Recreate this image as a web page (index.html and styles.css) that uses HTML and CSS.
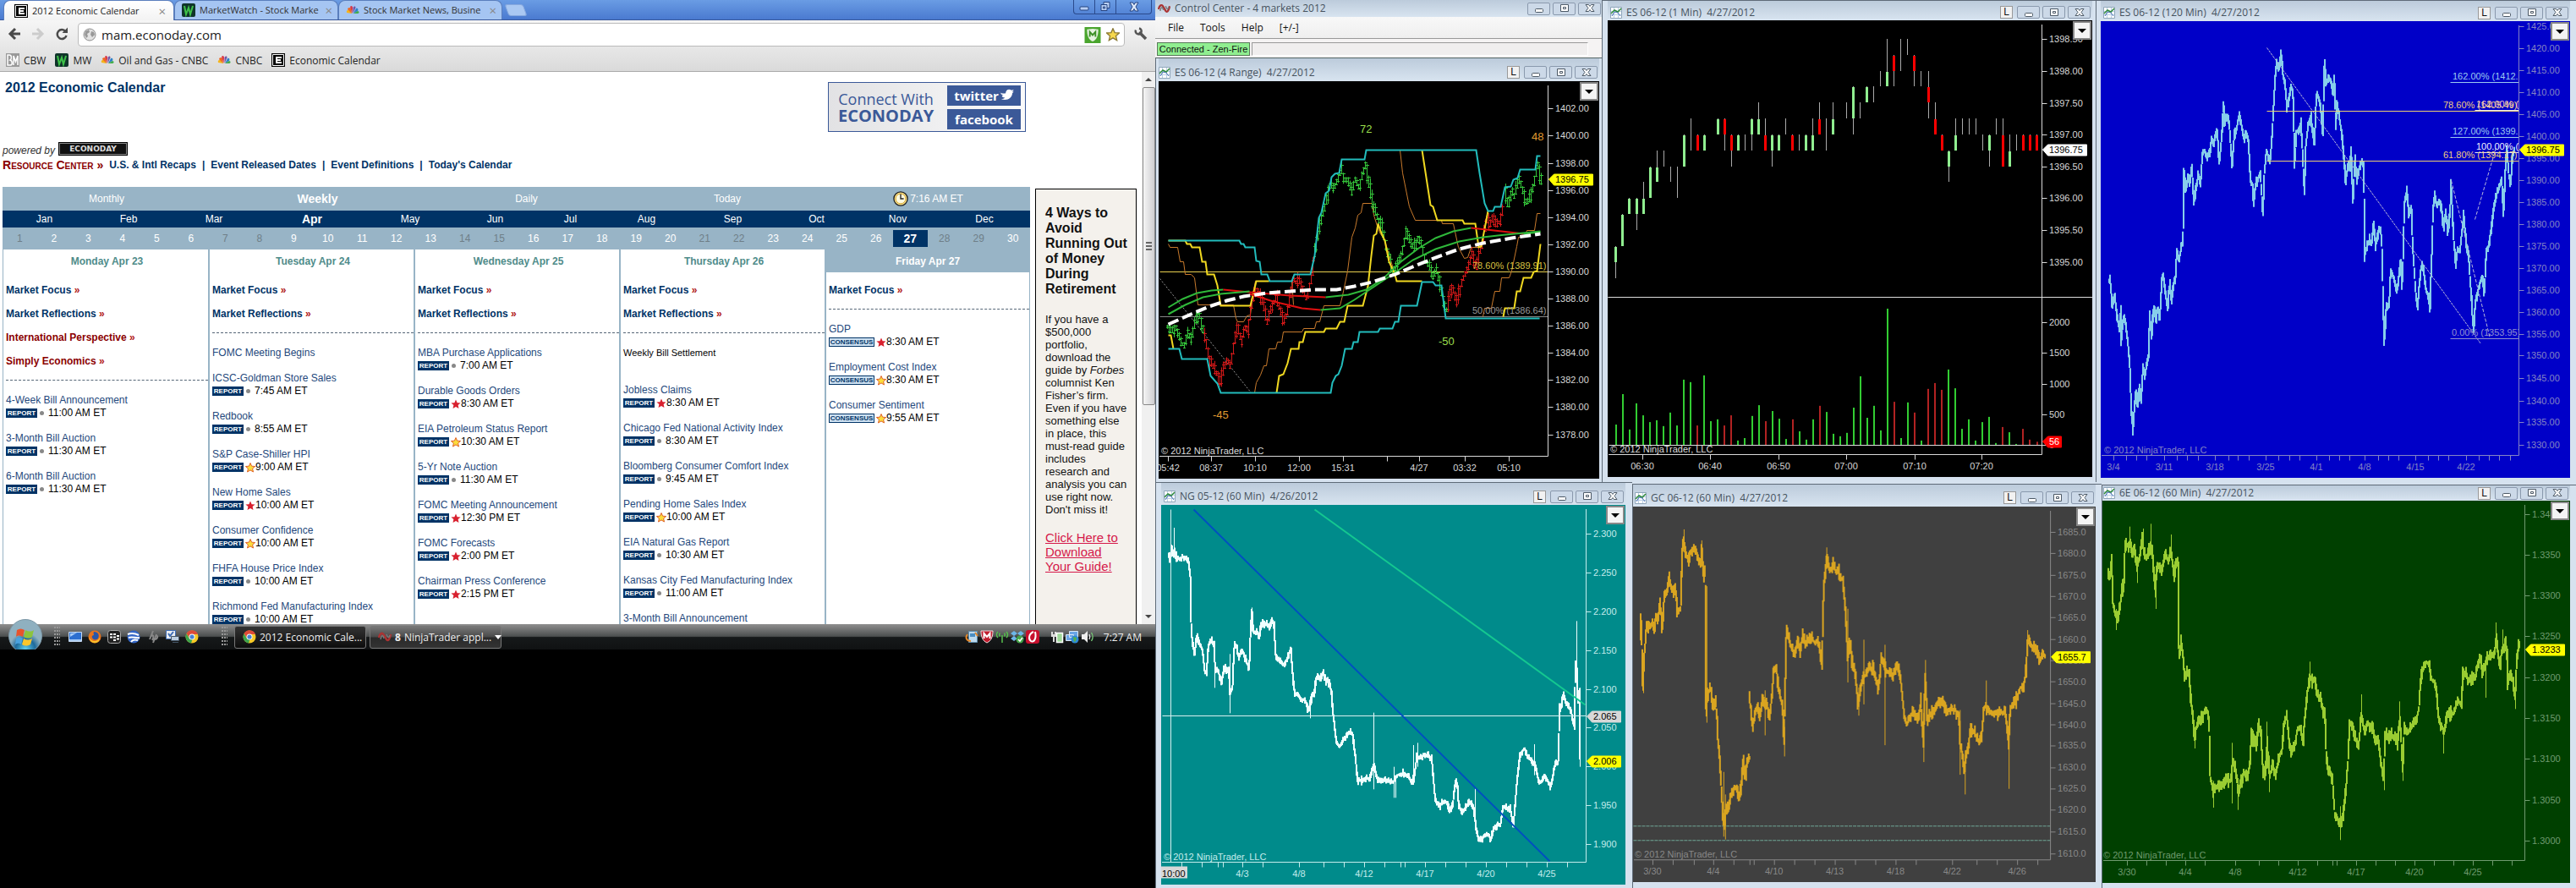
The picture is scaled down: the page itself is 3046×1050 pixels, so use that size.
FILE: index.html
```html
<!DOCTYPE html>
<html lang="en">
<head>
<meta charset="utf-8">
<title>2012 Economic Calendar</title>
<link rel="stylesheet" href="styles.css">
</head>
<body>
<svg class="defs" width="0" height="0" aria-hidden="true">
  <symbol id="i-econ" viewBox="0 0 16 16"><path fill="#000" d="M0 0h16v16H0z"/><path fill="none" stroke="#fff" d="M1.5 1.5h13v13h-13z"/><path fill="#fff" d="M5 4h7v2H7v1h4v2H7v1h5v2H5z"/></symbol>
  <symbol id="i-mw" viewBox="0 0 16 16"><rect width="16" height="16" rx="2" fill="#10352a"/><path d="M3 3l2 10 3-8 2 8 3-10" fill="none" stroke="#3fc24a" stroke-width="2"/></symbol>
  <symbol id="i-nbc" viewBox="0 0 16 16"><path fill="#f4b51c" d="M7 12L1 11c-1-2 1-4 3-3z"/><path fill="#ee6a26" d="M7 12L2 7c0-2 3-3 4-1z"/><path fill="#d93848" d="M7.500 12L5 4c1-2 3-1 3 1z"/><path fill="#7455a5" d="M8.500 12V5c1-2 3-2 3 0z"/><path fill="#2f82c8" d="M9 12l3-6c2-1 3 1 2 3z"/><path fill="#43ad4c" d="M9 12l5-3c2 0 2 3 0 3z"/></symbol>
  <symbol id="i-bm" viewBox="0 0 16 16"><path fill="#999" d="M0 0h16v16H0z"/><path fill="none" stroke="#fff" stroke-width="1.500" d="M2 2v12h3c3 0 3-5 0-6 2-1 2-6-1-6zM9 14V3l2.500 7L14 3v11"/></symbol>
  <symbol id="i-chart" viewBox="0 0 14 14"><path fill="#fff" stroke="#8fa6ba" d="M.5.5h13v13H.5z"/><path stroke="#b9cfe4" d="M4.500 1v12M9.500 1v12M1 5.500h12M1 9.500h12"/><path fill="none" stroke="#2f8a3c" stroke-width="1.500" d="M1 8l4-4 4 2 4-4"/><path fill="none" stroke="#4a6fb5" d="M2 11l3-5 4 1 3 4"/></symbol>
  <symbol id="i-nt" viewBox="0 0 16 12"><path fill="none" stroke="#a33" stroke-width="2.500" d="M1 7c1-5 4-7 6-3l3 5c2 3 4-1 5-6"/><path fill="none" stroke="#777" stroke-width="1.500" d="M3 9c1-5 3-6 4-1M10 3c1 4 3 5 4 1"/></symbol>
  <symbol id="i-min" viewBox="0 0 14 12"><rect x="2.500" y="6.500" width="9" height="4" rx="1" fill="#fff" stroke="#4c5966"/></symbol>
  <symbol id="i-max" viewBox="0 0 14 12"><path fill="#fff" stroke="#4c5966" d="M2.500 1.500h9v8h-9z"/><path fill="none" stroke="#4c5966" d="M5.500 4.500h3v2h-3z"/></symbol>
  <symbol id="i-close" viewBox="0 0 14 12"><path fill="#fff" stroke="#4c5966" d="M2 1.500h3.500L7 3.500l1.500-2H12L9 5.500l3 4H8.500L7 7.500l-1.500 2H2l3-4z"/></symbol>
  <symbol id="i-star" viewBox="0 0 12 12"><path d="M6 .5l1.600 3.700 4 .3-3 2.600.9 3.900L6 8.900 2.500 11l.9-3.900-3-2.600 4-.3z"/></symbol>
  <symbol id="i-chrome" viewBox="0 0 16 16"><circle cx="8" cy="8" r="7.500" fill="#f6c926"/><path fill="#dd4b39" d="M1.500 4.200A7.500 7.500 0 0 1 15 5H8L5 9z"/><path fill="#3da44d" d="M1.500 4.200L5 10l3.500 1L7 15.400A7.500 7.500 0 0 1 1.500 4.200z"/><circle cx="8" cy="8" r="3.500" fill="#fff"/><circle cx="8" cy="8" r="2.600" fill="#4a83d4"/></symbol>
</svg>
<div class="desktop">
  <div class="screen">
    <main class="browser">
      <header class="tabstrip">
        <div class="tab active"><svg class="i16"><use href="#i-econ"/></svg><span class="tab-name">2012 Economic Calendar</span><button class="tab-x" aria-label="Close tab">×</button></div>
        <div class="tab"><svg class="i16"><use href="#i-mw"/></svg><span class="tab-name">MarketWatch - Stock Marke</span><button class="tab-x" aria-label="Close tab">×</button></div>
        <div class="tab"><svg class="i16"><use href="#i-nbc"/></svg><span class="tab-name">Stock Market News, Busine</span><button class="tab-x" aria-label="Close tab">×</button></div>
        <button class="newtab" aria-label="New tab"></button>
        <div class="winctl"><button aria-label="Minimize"><svg viewBox="0 0 14 12"><rect x="2" y="6" width="10" height="4" rx="1" fill="#b9d0f5" stroke="#25427f"/></svg></button><button aria-label="Restore"><svg viewBox="0 0 14 12"><path fill="#b9d0f5" stroke="#25427f" d="M5 .5h7v7H5z"/><path fill="#b9d0f5" stroke="#25427f" d="M2 3.500h7v7H2zM4.500 6h2v2h-2z"/></svg></button><button class="wide" aria-label="Close"><svg viewBox="0 0 14 12"><path fill="#dbe7fa" stroke="#25427f" d="M2 1h3.500L7 3.500 8.500 1H12L9 6l3 5H8.500L7 8.500 5.500 11H2l3-5z"/></svg></button></div>
      </header>
      <div class="toolbar">
        <button class="nav" aria-label="Back"><svg viewBox="0 0 16 16"><path fill="none" stroke="#4a4a4a" stroke-width="3" d="M9 2L3 8l6 6M3 8h12"/></svg></button>
        <button class="nav" aria-label="Forward"><svg viewBox="0 0 16 16"><path fill="none" stroke="#ccc" stroke-width="3" d="M7 2l6 6-6 6M13 8H1"/></svg></button>
        <button class="nav" aria-label="Reload"><svg viewBox="0 0 16 16"><path fill="none" stroke="#4a4a4a" stroke-width="2.500" d="M12.500 5A5.500 5.500 0 1 0 13.500 10"/><path fill="#4a4a4a" d="M8.500 7H15V.5z"/></svg></button>
        <div class="omnibox">
          <svg class="i16" viewBox="0 0 16 16"><circle cx="8" cy="8" r="7" fill="#e3e3e3" stroke="#8d8d8d"/><path fill="#999" d="M3 4l4-2 1 3-3 2 1 3-2 2-2-4zM10 4l3 1 1 3-3 3-2-3z"/></svg>
          <input class="url" type="text" value="mam.econoday.com" aria-label="Address">
          <svg class="badge-m" viewBox="0 0 20 20"><path fill="#4aa52e" d="M0 0h20v20H0z"/><path fill="#e4f2df" d="M3 3l7-1 7 1c0 8-2 13-7 15C5 16 3 11 3 3z"/><path fill="none" stroke="#3b8f25" stroke-width="2" d="M6.500 12V6l3.500 4 3.500-4v6"/></svg>
          <svg class="i16 fav"><use href="#i-star"/></svg>
        </div>
        <button class="nav" aria-label="Settings"><svg viewBox="0 0 16 16"><path fill="none" stroke="#555" stroke-width="3.500" d="M6 6l8 8"/><path fill="none" stroke="#555" stroke-width="2.500" d="M2 3.500A3.500 3.500 0 1 0 6 1.500"/></svg></button>
      </div>
      <nav class="bookmarks">
        <a href="#"><svg class="i16"><use href="#i-bm"/></svg>CBW</a>
        <a href="#"><svg class="i16"><use href="#i-mw"/></svg>MW</a>
        <a href="#"><svg class="i16"><use href="#i-nbc"/></svg>Oil and Gas - CNBC</a>
        <a href="#"><svg class="i16"><use href="#i-nbc"/></svg>CNBC</a>
        <a href="#"><svg class="i16"><use href="#i-econ"/></svg>Economic Calendar</a>
      </nav>
      <div class="viewport">
        <div class="page">
          <div class="masthead">
            <h1>2012 Economic Calendar</h1>
            <div class="connect">
              <div class="connect-text"><span>Connect With</span><b>ECONODAY</b></div>
              <div class="social"><a class="tw" href="#">twitter<svg viewBox="0 0 20 16"><path fill="#fff" d="M0 3c3 3 6 4 9 3 0-4 4-7 8-4l3-1-2 3 2 0-2 2c0 6-7 11-15 8 2 0 4-1 5-2-3 0-4-2-4-3h2C3 8 2 6 2 6l2 0C2 5 1 4 0 3z"/></svg></a><a href="#">facebook</a></div>
            </div>
          </div>
          <p class="powered"><i>powered by</i><span class="econo-logo">ECONODAY</span></p>
          <nav class="resource"><span class="rc"><b>R</b>esource <b>C</b>enter »</span><a href="#">U.S. &amp; Intl Recaps</a><span>|</span><a href="#">Event Released Dates</a><span>|</span><a href="#">Event Definitions</a><span>|</span><a href="#">Today's Calendar</a></nav>
          <div class="content">
            <section class="calendar">
              <div class="views"><a href="#">Monthly</a><a href="#" class="on">Weekly</a><a href="#">Daily</a><a href="#">Today</a><span class="clock"><svg viewBox="0 0 20 24"><circle cx="10" cy="12" r="9" fill="#f7e08a" stroke="#222" stroke-width="1.500"/><circle cx="10" cy="12" r="6.500" fill="#fffbe0" stroke="#d1a02a"/><path d="M10 6v6h4" fill="none" stroke="#222" stroke-width="1.500"/></svg>7:16 AM ET</span></div>
              <div class="months"><a href="#">Jan</a><a href="#">Feb</a><a href="#">Mar</a><a href="#" class="on">Apr</a><a href="#">May</a><a href="#">Jun</a><a href="#">Jul</a><a href="#">Aug</a><a href="#">Sep</a><a href="#">Oct</a><a href="#">Nov</a><a href="#">Dec</a></div>
              <div class="days"><a href="#" class="off">1</a><a href="#">2</a><a href="#">3</a><a href="#">4</a><a href="#">5</a><a href="#">6</a><a href="#" class="off">7</a><a href="#" class="off">8</a><a href="#">9</a><a href="#">10</a><a href="#">11</a><a href="#">12</a><a href="#">13</a><a href="#" class="off">14</a><a href="#" class="off">15</a><a href="#">16</a><a href="#">17</a><a href="#">18</a><a href="#">19</a><a href="#">20</a><a href="#" class="off">21</a><a href="#" class="off">22</a><a href="#">23</a><a href="#">24</a><a href="#">25</a><a href="#">26</a><a href="#" class="on">27</a><a href="#" class="off">28</a><a href="#" class="off">29</a><a href="#">30</a></div>
              <div class="week">
                <div class="day"><h2>Monday Apr 23</h2>
                  <div class="links"><a href="#">Market Focus <i>»</i></a><a href="#">Market Reflections <i>»</i></a><a href="#" class="red">International Perspective <i>»</i></a><a href="#" class="red">Simply Economics <i>»</i></a></div>
                  <div class="ev"><a href="#">4-Week Bill Announcement</a><p><b class="rep">REPORT</b><i class="dot"></i>11:00 AM ET</p></div>
                  <div class="ev"><a href="#">3-Month Bill Auction</a><p><b class="rep">REPORT</b><i class="dot"></i>11:30 AM ET</p></div>
                  <div class="ev"><a href="#">6-Month Bill Auction</a><p><b class="rep">REPORT</b><i class="dot"></i>11:30 AM ET</p></div>
                </div>
                <div class="day"><h2>Tuesday Apr 24</h2>
                  <div class="links"><a href="#">Market Focus <i>»</i></a><a href="#">Market Reflections <i>»</i></a></div>
                  <div class="ev"><a href="#">FOMC Meeting Begins</a></div>
                  <div class="ev"><a href="#">ICSC-Goldman Store Sales</a><p><b class="rep">REPORT</b><i class="dot"></i>7:45 AM ET</p></div>
                  <div class="ev"><a href="#">Redbook</a><p><b class="rep">REPORT</b><i class="dot"></i>8:55 AM ET</p></div>
                  <div class="ev"><a href="#">S&amp;P Case-Shiller HPI</a><p><b class="rep">REPORT</b><svg class="st gold"><use href="#i-star"/></svg>9:00 AM ET</p></div>
                  <div class="ev"><a href="#">New Home Sales</a><p><b class="rep">REPORT</b><svg class="st"><use href="#i-star"/></svg>10:00 AM ET</p></div>
                  <div class="ev"><a href="#">Consumer Confidence</a><p><b class="rep">REPORT</b><svg class="st gold"><use href="#i-star"/></svg>10:00 AM ET</p></div>
                  <div class="ev"><a href="#">FHFA House Price Index</a><p><b class="rep">REPORT</b><i class="dot"></i>10:00 AM ET</p></div>
                  <div class="ev"><a href="#">Richmond Fed Manufacturing Index</a><p><b class="rep">REPORT</b><i class="dot"></i>10:00 AM ET</p></div>
                </div>
                <div class="day"><h2>Wednesday Apr 25</h2>
                  <div class="links"><a href="#">Market Focus <i>»</i></a><a href="#">Market Reflections <i>»</i></a></div>
                  <div class="ev"><a href="#">MBA Purchase Applications</a><p><b class="rep">REPORT</b><i class="dot"></i>7:00 AM ET</p></div>
                  <div class="ev"><a href="#">Durable Goods Orders</a><p><b class="rep">REPORT</b><svg class="st"><use href="#i-star"/></svg>8:30 AM ET</p></div>
                  <div class="ev"><a href="#">EIA Petroleum Status Report</a><p><b class="rep">REPORT</b><svg class="st gold"><use href="#i-star"/></svg>10:30 AM ET</p></div>
                  <div class="ev"><a href="#">5-Yr Note Auction</a><p><b class="rep">REPORT</b><i class="dot"></i>11:30 AM ET</p></div>
                  <div class="ev"><a href="#">FOMC Meeting Announcement</a><p><b class="rep">REPORT</b><svg class="st"><use href="#i-star"/></svg>12:30 PM ET</p></div>
                  <div class="ev"><a href="#">FOMC Forecasts</a><p><b class="rep">REPORT</b><svg class="st"><use href="#i-star"/></svg>2:00 PM ET</p></div>
                  <div class="ev"><a href="#">Chairman Press Conference</a><p><b class="rep">REPORT</b><svg class="st"><use href="#i-star"/></svg>2:15 PM ET</p></div>
                </div>
                <div class="day"><h2>Thursday Apr 26</h2>
                  <div class="links"><a href="#">Market Focus <i>»</i></a><a href="#">Market Reflections <i>»</i></a></div>
                  <div class="ev note"><span>Weekly Bill Settlement</span></div>
                  <div class="ev"><a href="#">Jobless Claims</a><p><b class="rep">REPORT</b><svg class="st"><use href="#i-star"/></svg>8:30 AM ET</p></div>
                  <div class="ev"><a href="#">Chicago Fed National Activity Index</a><p><b class="rep">REPORT</b><i class="dot"></i>8:30 AM ET</p></div>
                  <div class="ev"><a href="#">Bloomberg Consumer Comfort Index</a><p><b class="rep">REPORT</b><i class="dot"></i>9:45 AM ET</p></div>
                  <div class="ev"><a href="#">Pending Home Sales Index</a><p><b class="rep">REPORT</b><svg class="st gold"><use href="#i-star"/></svg>10:00 AM ET</p></div>
                  <div class="ev"><a href="#">EIA Natural Gas Report</a><p><b class="rep">REPORT</b><i class="dot"></i>10:30 AM ET</p></div>
                  <div class="ev"><a href="#">Kansas City Fed Manufacturing Index</a><p><b class="rep">REPORT</b><i class="dot"></i>11:00 AM ET</p></div>
                  <div class="ev"><a href="#">3-Month Bill Announcement</a></div>
                </div>
                <div class="day today"><h2>Friday Apr 27</h2>
                  <div class="links"><a href="#">Market Focus <i>»</i></a></div>
                  <div class="ev"><a href="#">GDP</a><p><b class="con">CONSENSUS</b><svg class="st"><use href="#i-star"/></svg>8:30 AM ET</p></div>
                  <div class="ev"><a href="#">Employment Cost Index</a><p><b class="con">CONSENSUS</b><svg class="st gold"><use href="#i-star"/></svg>8:30 AM ET</p></div>
                  <div class="ev"><a href="#">Consumer Sentiment</a><p><b class="con">CONSENSUS</b><svg class="st gold"><use href="#i-star"/></svg>9:55 AM ET</p></div>
                </div>
              </div>
            </section>
            <aside class="ad">
              <h3>4 Ways to<br>Avoid<br>Running Out<br>of Money<br>During<br>Retirement</h3>
              <p>If you have a<br>$500,000<br>portfolio,<br>download the<br>guide by <em>Forbes</em><br>columnist Ken<br>Fisher’s firm.<br>Even if you have<br>something else<br>in place, this<br>must-read guide<br>includes<br>research and<br>analysis you can<br>use right now.<br>Don't miss it!</p>
              <a href="#">Click Here to<br>Download<br>Your Guide!</a>
            </aside>
          </div>
        </div>
        <div class="scrollbar"><svg viewBox="0 0 8 8"><path fill="#444" d="M0 6l4-4 4 4z"/></svg><div class="thumb"><i></i><i></i><i></i></div><svg viewBox="0 0 8 8"><path fill="#444" d="M0 2l4 4 4-4z"/></svg></div>
      </div>
    </main>
    <footer class="taskbar">
      <button class="orb" aria-label="Start"><svg viewBox="0 0 42 36"><defs><radialGradient id="og" cx=".5" cy=".9"><stop offset="0" stop-color="#5fd0f0"/><stop offset=".6" stop-color="#1d6a9c"/><stop offset="1" stop-color="#8fb0c0"/></radialGradient></defs><circle cx="21" cy="20" r="19.500" fill="url(#og)" stroke="#7c97a6"/><path fill="#e8542c" d="M11 13c3-2 6-2 9 0l-2 8c-3-2-6-2-8 0z"/><path fill="#8cc43c" d="M21 13c4 2 7 2 10 0l-2 8c-3 2-6 2-10 0z"/><path fill="#4aa3e0" d="M10 23c3-2 5-2 8 0l-2 7c-3-2-5-1-7 0z"/><path fill="#fbc62c" d="M19 23c3 2 6 2 10 0l-2 7c-4 2-7 2-10 0z"/></svg></button>
      <span class="grip"></span>
      <div class="quick">
        <svg viewBox="0 0 16 16"><path fill="#2c6fd0" stroke="#c6daf2" d="M.5 2.500h15v11H.5z"/><path fill="#a8ccf5" d="M1 11h14v2H1zM2 4l8-1-8 5z"/></svg>
        <svg viewBox="0 0 16 16"><circle cx="8" cy="8" r="7.500" fill="#e8731c"/><path fill="#2a56a8" d="M7 2c5 0 7 4 5 8-2 2-6 2-7-1-1-2 1-3 2-3 0-1-1-2 0-4z"/><path fill="#f9c22b" d="M1 7c1 6 9 9 13 2 0 8-12 9-13-2z"/></svg>
        <svg viewBox="0 0 16 16"><rect x=".5" y=".5" width="15" height="15" rx="3" fill="#222" stroke="#aaa"/><path fill="#fff" d="M3 4h3v2H3zM7 4h3v2H7zM3 7.500h3v2H3zM7 7.500h3v2H7zM11 6h3v2h-3zM7 11h3v2H7zM11 9.500h3v2h-3z"/></svg>
        <svg viewBox="0 0 16 16"><circle cx="8" cy="8" r="7.500" fill="#3467c8"/><path fill="none" stroke="#fff" stroke-width="2" d="M1 5c5-2 9-1 13 1M2 9c5-2 8 1 13 0M5 14c2-3 5-3 8-2"/></svg>
        <svg viewBox="0 0 16 16"><path fill="none" stroke="#888" stroke-width="2" d="M8 1L4 11M6 7c3-2 3 1 1 5M12 5L8 15M11 7c4-1 2 4-1 4"/></svg>
        <svg viewBox="0 0 16 16"><path fill="#e9edf2" stroke="#3e6db5" d="M.5.5h11v10H.5z"/><path stroke="#3e6db5" stroke-width="2" fill="none" d="M3 4l2 3 4-5"/><path fill="#bcd" stroke="#456" d="M6.500 7.500h9v5h-9zM8 14.500h7"/></svg>
        <svg viewBox="0 0 16 16"><use href="#i-chrome"/></svg>
      </div>
      <span class="grip"></span>
      <button class="task on"><svg><use href="#i-chrome"/></svg>2012 Economic Cale...</button>
      <button class="task"><svg viewBox="0 0 16 12"><use href="#i-nt"/></svg><b>8</b> NinjaTrader appl...<span class="caret"></span></button>
      <div class="tray">
        <svg viewBox="0 0 16 16"><path fill="#bcd9ee" stroke="#5f8fb0" d="M4.500 1.500h10v13h-10z"/><path fill="none" stroke="#e6892a" stroke-width="2" d="M3 5c-3 4-1 8 4 8M12 3l3 4"/><path fill="#4b8ec2" d="M6 4h6v4H6z"/></svg>
        <svg viewBox="0 0 16 16"><path fill="#c01d2e" stroke="#f2d9dc" d="M1 1h14c0 7-2 12-7 14C3 13 1 8 1 1z"/><path fill="none" stroke="#fff" stroke-width="2" d="M4.500 10V4L8 8l3.500-4v6"/></svg>
        <svg viewBox="0 0 16 16"><path fill="none" stroke="#55c04c" stroke-width="1.500" d="M3 2c-2 2-2 5 0 7M13 2c2 2 2 5 0 7M5.500 3.500c-1 1-1 3 0 4M10.500 3.500c1 1 1 3 0 4M8 6v9"/></svg>
        <svg viewBox="0 0 16 16"><path fill="#6db6e8" d="M4 1l4 3-4 3-4-3zM12 1l4 3-4 3-4-3zM4 7l4 3-4 3-4-3zM12 7l4 3-4 3-4-3z"/><circle cx="11" cy="11" r="4.500" fill="#43a447"/><path fill="none" stroke="#fff" stroke-width="1.500" d="M9 11l2 2 3-4"/></svg>
        <svg viewBox="0 0 16 16"><rect width="16" height="16" rx="3" fill="#c8102e"/><path fill="none" stroke="#fff" stroke-width="2" d="M9 2C3 5 3 11 6 13s7-2 5-11"/></svg>
        <svg class="apart" viewBox="0 0 16 16"><path fill="#ddd" d="M1 2h2v3h2V2h2v6H5v6H3V8H1z"/><path fill="#9fd89a" stroke="#fff" stroke-width="1.500" d="M7.500 3.500h7v11h-7z"/></svg>
        <svg viewBox="0 0 16 16"><path fill="#6aa5e6" stroke="#dbe8f5" d="M4.500 1.500h10v7h-10zM.5 5.500h9v7h-9z"/><circle cx="11" cy="11" r="4.500" fill="#2f8bd6"/><path fill="#58b247" d="M9 8l4 1-1 4-2 1z"/></svg>
        <svg viewBox="0 0 16 16"><path fill="#eee" d="M1 5h3l4-4v14l-4-4H1z"/><path fill="none" stroke="#eee" stroke-width="1.300" d="M10 5c1 2 1 4 0 6"/><path fill="none" stroke="#7c7" stroke-width="1.300" d="M12.500 3c2 3 2 7 0 10"/></svg>
        <time>7:27 AM</time>
      </div>
    </footer>
  </div>

  <div class="screen2">
    <div class="row top">
      <div class="stack">
        <section class="control">
          <header class="cbar"><svg class="nt" viewBox="0 0 16 12"><use href="#i-nt"/></svg><h2>Control Center - 4 markets 2012</h2><span class="ctl"><button aria-label="Minimize"><svg><use href="#i-min"/></svg></button><button aria-label="Maximize"><svg><use href="#i-max"/></svg></button><button aria-label="Close"><svg><use href="#i-close"/></svg></button></span></header>
          <nav class="menu"><button>File</button><button>Tools</button><button>Help</button><button>[+/-]</button></nav>
          <div class="status"><span class="ok">Connected - Zen-Fire</span><span class="well"></span></div>
        </section>
        <section class="win w1" data-chart="range4" data-title="ES 06-12 (4 Range)  4/27/2012"></section>
      </div>
      <section class="win w2" data-chart="min1" data-title="ES 06-12 (1 Min)  4/27/2012"></section>
      <section class="win w3" data-chart="min120" data-title="ES 06-12 (120 Min)  4/27/2012"></section>
    </div>
    <div class="row bottom">
      <section class="win w4" data-chart="gas" data-title="NG 05-12 (60 Min)  4/26/2012"></section>
      <section class="win w5" data-chart="gold" data-title="GC 06-12 (60 Min)  4/27/2012"></section>
      <section class="win w6" data-chart="euro" data-title="6E 06-12 (60 Min)  4/27/2012"></section>
    </div>
  </div>
</div>
<script src="charts.js"></script>
</body>
</html>
```
FILE: styles.css
```css
* { box-sizing: border-box; }
body { margin: 0; background: #000; font-family: "Liberation Sans", Arial, sans-serif; font-size: 12px; }
h1, h2, h3, p { margin: 0; font-weight: normal; }
a { text-decoration: none; color: inherit; }
button { font: inherit; padding: 0; border: 0; background: none; color: inherit; }
.defs { position: absolute; }
.desktop { display: grid; grid-template-columns: 1366fr 1680fr; align-items: start; }
.screen { min-width: 0; background: #000; }
.i16 { width: 16px; height: 16px; flex: none; }

/* browser chrome */
.browser { font-family: "Open Sans", "Noto Sans", sans-serif; }
.tabstrip { display: flex; height: 24px; background: linear-gradient(#6a9ce4, #4a7ad0); border-bottom: 1px solid #39589a; padding-left: 4px; align-items: flex-end; }
.tab { display: flex; align-items: center; gap: 5px; width: 194px; height: 23px; padding: 0 6px 0 8px; background: #a5c5f2; border: 1px solid #5a7ebd; border-bottom: 0; border-radius: 8px 8px 0 0; color: #333; font-size: 11px; }
.tab.active { width: 202px; height: 24px; margin-bottom: -1px; background: linear-gradient(#fff, #f3f3f3); padding: 0 9px 0 12px; color: #222; }
.tab-name { flex: 1; white-space: nowrap; line-height: 20px; }
.tab-x { color: #888; font-size: 15px; line-height: 18px; }
.newtab { width: 22px; height: 14px; background: #aac8f2; border: 1px solid #86a8de; border-radius: 3px; transform: skewX(20deg); margin: 0 0 4px 5px; }
.winctl { margin-left: auto; margin-right: 4px; align-self: flex-start; display: flex; height: 17px; border: 1px solid #2a4a8c; border-top: 0; border-radius: 0 0 4px 4px; }
.winctl button { width: 25px; display: grid; place-items: center; border-right: 1px solid #2a4a8c; }
.winctl button.wide { width: 41px; border: 0; }
.winctl svg { width: 14px; height: 12px; }
.toolbar { display: flex; align-items: center; gap: 10px; height: 34px; padding: 2px 8px; background: linear-gradient(#f6f6f6, #e6e6e6); }
.nav { width: 18px; height: 18px; }
.nav svg { width: 16px; height: 16px; }
.omnibox { flex: 1; height: 28px; display: flex; align-items: center; gap: 6px; background: #fff; border: 1px solid #bbb; border-radius: 4px; padding: 0 5px; }
.url { flex: 1; min-width: 0; border: 0; outline: 0; font: 15px "Open Sans", "Noto Sans", sans-serif; color: #222; padding: 0; height: 24px; background: none; }
.badge-m { width: 20px; height: 19px; }
.fav { fill: #f7d84c; stroke: #8c7a35; stroke-width: 1; }
.bookmarks { display: flex; align-items: center; gap: 11px; height: 27px; padding: 0 7px; background: linear-gradient(#e6e6e6, #dadada); border-bottom: 1px solid #aaa; color: #222; }
.bookmarks a { display: flex; align-items: center; gap: 5px; }

/* page */
.viewport { display: flex; height: 653px; overflow: hidden; background: #fff; font-family: "Liberation Sans", Arial, sans-serif; }
.page { flex: 1; min-width: 0; padding: 12px 6px 0 3px; }
.masthead { display: flex; justify-content: space-between; align-items: flex-start; padding: 0 131px 0 3px; height: 69px; }
h1 { font-size: 16px; line-height: 14px; font-weight: bold; color: #036; }
.connect { display: flex; width: 234px; height: 59px; border: 1px solid #3b5998; padding: 3px 5px 3px 11px; background: linear-gradient(90deg, #e2e2e4, #fafafa); justify-content: space-between; }
.connect-text { display: flex; flex-direction: column; align-items: center; justify-content: center; color: #3b5998; font-family: "Open Sans", sans-serif; font-size: 18px; line-height: 20px; }
.connect-text b { font-size: 20px; }
.social { display: flex; flex-direction: column; gap: 4px; width: 87px; }
.social a { flex: 1; background: #3b5998; color: #fff; font: bold 15px/24px "Open Sans", sans-serif; text-align: center; }
.social svg { width: 18px; height: 14px; }
.powered { display: flex; align-items: center; gap: 5px; height: 20px; color: #333; }
.powered i { padding-top: 4px; }
.econo-logo { width: 80px; height: 14px; background: #111; border: 1px solid #888; outline: 1px solid #000; color: #ddd; font: bold 9px/12px "DejaVu Sans", sans-serif; text-align: center; }
.resource { display: flex; height: 35px; align-items: flex-start; font-weight: bold; color: #036; line-height: 18px; gap: 7px; }
.rc { font-variant: small-caps; color: #8b0000; font-size: 14px; }
.content { display: flex; gap: 6px; align-items: flex-start; }
.calendar { flex: 1; min-width: 0; }
.views, .months, .days { display: grid; text-align: center; color: #fff; background: #98b4c6; }
.views { grid-template-columns: 246fr 253fr 241fr 234fr 241fr; height: 28px; line-height: 28px; }
.views .on, .months .on { font-weight: bold; font-size: 14px; }
.clock { display: flex; justify-content: center; align-items: center; gap: 2px; }
.clock svg { width: 18px; height: 24px; }
.months { grid-template-columns: 99fr 100fr 102fr 130fr 102fr 99fr 79fr 101fr 103fr 95fr 97fr 108fr; height: 20px; line-height: 20px; background: #036; }
.days { grid-template-columns: repeat(30, 1fr); height: 26px; padding: 3px 0; line-height: 20px; }
.days .off { color: #6f7f88; }
.days .on { background: #036; font-weight: bold; font-size: 14px; }
.week { display: grid; grid-template-columns: repeat(5, 1fr); height: 470px; }
.day { border-left: 1px solid #98b4c6; padding-left: 3px; min-width: 0; }
.day + .day { border-left-width: 2px; }
.day:last-child { border-right: 1px solid #98b4c6; }
h2 { font-size: 12px; }
.day h2 { height: 27px; line-height: 28px; text-align: center; font-weight: bold; color: #4f8c8a; }
.today h2 { background: #98b4c6; color: #fff; margin-left: -3px; }
.links { display: flex; flex-direction: column; padding: 14px 0 15px; gap: 14px; border-bottom: 1px dashed #567; margin-bottom: 16px; font-weight: bold; color: #036; line-height: 14px; }
.links i { font-style: normal; color: #b01818; }
.links .red { color: #8b0000; }
.ev { line-height: 15px; margin-bottom: 15px; color: #24487c; white-space: nowrap; }
.ev.note { font-size: 11px; color: #000; margin-bottom: 29px; }
.ev p { display: flex; align-items: center; color: #000; height: 15px; }
.rep, .con { height: 11px; flex: none; font: bold 8px/11px "Liberation Sans", sans-serif; text-align: center; background: #036; color: #fff; width: 37px; }
.con { width: 54px; background: #cfe2f2; color: #036; border: 1px solid #036; line-height: 10px; }
.dot { width: 5px; height: 5px; border-radius: 50%; background: #888; margin: 0 5px 0 3px; }
.st { width: 12px; height: 12px; margin-left: 2px; fill: #d8202e; }
.st.gold { fill: #fbdc3c; stroke: #e0622a; stroke-width: 1; }
.ad { width: 120px; margin-top: 2px; height: 540px; border: 1px solid #000; background: #f4f1ec; padding: 19px 0 0 11px; white-space: nowrap; color: #111; }
.ad h3 { font-size: 16px; line-height: 18px; font-weight: bold; margin-bottom: 19px; }
.ad p { font-size: 13px; line-height: 15px; margin-bottom: 17px; }
.ad a { display: block; font-size: 15px; line-height: 17px; color: #d5194a; text-decoration: underline; }
.scrollbar { width: 16px; background: #f0f0f0; display: flex; flex-direction: column; align-items: center; padding: 5px 0; }
.scrollbar svg { width: 8px; height: 8px; }
.thumb { width: 15px; height: 376px; margin: 5px 0 auto; border: 1px solid #888; border-radius: 2px; background: linear-gradient(90deg, #f5f5f5, #cfcfd2); display: flex; flex-direction: column; justify-content: center; align-items: center; gap: 2px; }
.thumb i { width: 7px; height: 2px; background: #666; }

/* taskbar */
.taskbar { display: flex; align-items: center; height: 30px; padding: 0 16px 0 9px; background: linear-gradient(#8f8f8f, #4c4f4f 48%, #16191a 52%, #101213); color: #eee; font-family: "Open Sans", "Noto Sans", sans-serif; }
.orb { width: 42px; height: 36px; margin-top: -6px; position: relative; }
.orb svg { width: 42px; height: 36px; }
.grip { width: 7px; height: 24px; margin: 0 10px 0 13px; background: radial-gradient(circle at 1px 1px, #999 1px, transparent 1px) 0 0 / 3px 4px; }
.quick { display: flex; gap: 7px; margin-right: 19px; }
.quick svg, .task svg { width: 16px; height: 16px; flex: none; }
.taskbar .quick + .grip { margin: 0 8px; }
.task { display: flex; align-items: center; gap: 4px; width: 156px; height: 27px; padding: 0 9px; margin-right: 4px; border: 1px solid #777; border-radius: 3px; background: linear-gradient(#777, #4a4a4a 48%, #2a2a2a 52%, #333); white-space: nowrap; }
.task.on { background: linear-gradient(#333, #0c0c0c); }
.caret { margin-left: auto; margin-right: -6px; border: 4px solid transparent; border-top: 5px solid #fff; border-bottom: 0; }
.tray { margin-left: auto; display: flex; align-items: center; gap: 2px; }
.tray svg { width: 16px; height: 16px; }
.tray .apart { margin-left: 11px; }
.tray time { margin-left: 9px; }

/* trading windows */
.screen2 { min-width: 0; background: #d6e2ef; font-family: "Open Sans", "Noto Sans", sans-serif; }
.row { display: grid; align-items: stretch; }
.top { grid-template-columns: 528fr 584fr 568fr; }
.bottom { grid-template-columns: 564fr 555fr 561fr; }
.control { background: #f0eeee; }
.cbar, .bar { display: flex; align-items: center; background: linear-gradient(#bccbdb, #d8e4f0); color: #46525e; }
.cbar { height: 20px; padding: 0 1px 0 3px; gap: 5px; }
.cbar h2, .bar h2 { flex: 1; white-space: pre; line-height: 18px; }
.nt { width: 15px; height: 12px; }
.ctl { display: flex; gap: 3px; }
.ctl button { width: 27px; height: 15px; border: 1px solid #8a99ad; border-radius: 2px; background: #ccd9e8; display: grid; place-items: center; }
.ctl svg { width: 14px; height: 12px; }
.menu { display: flex; gap: 19px; padding: 0 15px; height: 26px; background: linear-gradient(#f8f8f8, #efefef); border-bottom: 1px solid #999; color: #111; }
.status { display: flex; gap: 2px; height: 23px; padding: 4px 16px 2px 2px; background: #f5f3f3; border-bottom: 1px solid #566; }
.ok { background: #90ee90; border: 1px solid #5a7a5a; width: 110px; font: 11px/14px "Liberation Sans", sans-serif; text-align: center; color: #111; white-space: nowrap; }
.well { flex: 1; border: 1px solid #999; border-right-color: #fff; border-bottom-color: #fff; background: #f0eeee; }
.win { position: relative; min-width: 0; border-left: 1px solid #5f6b78; border-top: 1px solid #5f6b78; background: #d6e2ef; }
.bar { gap: 5px; }
.bar .ico { width: 14px; height: 14px; }
.lbtn { width: 15px; height: 15px; border: 1px solid #999; background: #f2f2f2; font: 12px/13px "Liberation Sans", sans-serif; color: #111; }
.plot { display: block; width: 100%; height: auto; }
.frame { position: relative; }
.drop { position: absolute; top: 1px; right: 1px; width: 22px; height: 22px; border: 2px solid #888; background: #f4f4f4; display: grid; place-items: center; }
.drop::after { content: ""; border: 5px solid transparent; border-top: 5px solid #000; border-bottom: 0; }
.w1 { padding: 0 3px 4px; border-top: 0; }
.w1 .bar { height: 27px; padding: 6px 2px 0 0; }
.w2 { padding: 0 4px 6px 6px; }
.w2 .bar, .w3 .bar { padding: 4px 2px 0 3px; }
.w2 .bar { height: 23px; }
.w3 { padding: 0 7px 5px 5px; }
.w3 .bar { height: 24px; }
.w4 { padding: 0 8px 4px 6px; }
.w4 .bar { height: 26px; padding: 6px 2px 0 3px; }
.w5 { padding: 0 7px 6px 0; margin-top: 2px; }
.w5 .bar { height: 26px; padding: 5px 2px 0 2px; }
.w6 { padding: 0 7px 6px 0; margin-top: 3px; }
.w6 .bar { height: 18px; padding: 0 2px 0 1px; }
.plot text { font: 11px "Liberation Sans", Arial, sans-serif; }
.plot .big { font-size: 13px; }
```
FILE: charts.js
```js
const charts = {
  range4: {
    w: 521, h: 470, origin: [29, 264], step: [2.904, 2.751], bg: '#000', ink: '#d8d8d8', axisX: 1366, axisY: 1484,
    yTicks: [[352,'1402.00'],[440,'1400.00'],[530,'1398.00'],[618,'1396.00'],[706,'1394.00'],[794,'1392.00'],[882,'1390.00'],[970,'1388.00'],[1058,'1386.00'],[1146,'1384.00'],[1234,'1382.00'],[1322,'1380.00'],[1413,'1378.00']],
    xTicks: [[60,'05:42'],[208,'08:37'],[361,'10:10'],[512,'12:00'],[662,'15:31'],[814,''],[923,'4/27'],[1080,'03:32'],[1232,'05:10']],
    tag: [[583, '1396.75', '#ff0', '#000']],
    lines: [
      ['#e8d050', 1, '32,884 1366,884'], ['#888', 1, '32,1030 1366,1030'], ['#999', 1, '32,906 345,1277', '2 2'],
      ['#c87a2c', 1, '60,792 66,804 94,804 102,850 112,850 118,891 140,891 152,903 164,990 286,990 294,1035 298,1046 320,1046 330,1025 342,1022 354,940 360,914 486,914 490,990'],
      ['#c87a2c', 1, '356,1277 364,1243 378,1218 388,1188 398,1188 406,1134 430,1134 436,1112 450,1112 456,1079 520,1079 526,1068 562,1068 570,1046 582,1046 594,992 650,992 660,960 676,880 690,770 702,740 712,700 722,690 730,661 760,661 768,700 784,750 804,780 838,890'],
      ['#c87a2c', 1, '856,486 866,560 890,670 908,716 1000,716 1002,727 1040,727 1056,804 1076,838 1090,836 1100,804 1130,804'],
      ['#c87a2c', 1, '1140,1030 1146,1002 1170,1002 1182,946 1198,946 1206,903 1232,903 1240,880 1256,800 1264,770 1286,768 1292,749 1318,749 1326,694 1338,694']
    ],
    over: [
      ['#f0d820', 2, '60,782 118,782 126,793 136,793 142,804 168,804 176,850 188,850 194,891 218,891 230,926 240,992 344,992 362,914 406,914'],
      ['#f0d820', 2, '60,1090 70,1090 78,1134'],
      ['#f0d820', 2, '432,1277 440,1220 456,1216 470,1180 482,1134 508,1134 512,1112 524,1112 532,1079 596,1079 602,1068 640,1068 650,1046 664,1046 676,992 730,992 745,930 758,830 768,766 776,760 782,726 790,750 804,780 820,850 838,890 844,914 932,914'],
      ['#f0d820', 2, '932,486 962,665 970,670 984,716 1072,716 1078,727 1116,727 1128,804 1136,800 1158,684'],
      ['#f0d820', 2, '1212,1030 1218,1002 1248,1002 1258,946 1270,946 1280,903 1308,903 1316,884 1326,880 1338,793'],
      ['#22bcbc', 2, '60,782 304,782 310,793 318,793 326,804 356,804 362,847 374,850 380,891 402,891 408,914 486,914 494,891 550,891 562,830 577,708 588,690 600,628 612,620 620,575 634,563 648,560 656,518 734,518 740,486 1118,486 1130,560 1148,660 1160,684 1175,684 1182,672 1203,672 1216,608 1238,605 1246,582 1260,578 1268,550 1320,550 1328,507 1338,507'],
      ['#22bcbc', 2, '60,1134 100,1134 106,1167 194,1167 206,1220 228,1245 242,1277 618,1277 624,1243 636,1220 646,1216 656,1188 668,1134 692,1134 698,1112 710,1112 716,1079 782,1079 788,1068 830,1068 838,1046 850,1046 860,992 914,992 932,915 970,915 980,926 998,926 1014,1035 1336,1035'],
      ['#2fb83a', 2, '60,998 110,970 160,952 210,943 250,941'], ['#e01010', 2, '250,941 340,950 480,960 600,965'],
      ['#2fb83a', 2, '600,965 680,958 740,940 800,905 860,850 920,805 980,772 1040,750 1100,741'], ['#e01010', 2, '1100,741 1180,748 1280,760'], ['#2fb83a', 2, '1280,760 1338,755'],
      ['#2fb83a', 2, '60,1020 120,990 180,966 240,955 340,947'], ['#e01010', 2, '340,955 420,980 520,1000 584,1006'],
      ['#2fb83a', 2, '584,1006 650,1000 700,975 760,935 830,890 900,845 980,810 1060,785 1140,770 1220,763 1338,752'],
      ['#fff', 4, '60,1053 140,1020 200,997 260,977 320,962 400,952 480,945 560,942 640,940 700,930 760,916 840,890 900,867 980,836 1060,808 1140,790 1240,773 1338,758', '13 5']
    ],
    prices: [
      ['#34c43a', 8, '60,1060 72,1080 86,1060 106,1115 116,1125 128,1080 140,1100 152,1050 168,1020 182,1080', 2],
      ['#d01818', 8, '188,1100 200,1160 215,1190 240,1240 250,1200 262,1170 275,1190 290,1100 300,1060 312,1110 325,1060 335,1070 350,980 362,940 375,960 388,990 400,1050 415,1000 430,970 440,990 455,1040 470,1020 480,960 492,910 500,920 512,915 524,940 536,970 550,920 560,860', 2],
      ['#34c43a', 8, '562,830 578,740 590,700 602,660 615,600 628,610 640,590 655,550 665,580 678,580 692,630 702,580 715,610 730,560 740,530 750,600 765,670 780,710 795,740 815,830 830,880 845,860 860,840 878,750 890,780 905,810 920,770 932,800 942,850 955,860 970,900 982,880 992,910 1005,980 1015,1010', 2],
      ['#d01818', 8, '1020,1000 1035,930 1050,980 1070,910 1090,870 1104,830 1118,870 1130,820 1140,790 1155,710 1165,730 1175,705 1185,730 1200,720 1210,680', 2],
      ['#34c43a', 8, '1218,625 1228,670 1240,620 1250,640 1265,575 1275,610 1290,660 1305,640 1320,580 1330,530 1342,590', 2]
    ],
    notes: [[720,422,'72','#9adf4c','big'],[1311,445,'48','#e09a30','big'],[214,1352,'-45','#e09a30','big'],[990,1110,'-50','#9adf4c','big'],[1106,864,'78.60% (1389.91)','#d8c040'],[1106,1010,'50.00% (1386.64)','#999'],[38,1467,'© 2012 NinjaTrader, LLC','#ddd']]
  },
  min1: {
    w: 573, h: 540, origin: [29, 66], step: [2.651, 2.751], bg: '#000', ink: '#d8d8d8', axisX: 1388, axisY: 1478,
    yTicks: [[126,'1398.50'],[230,'1398.00'],[335,'1397.50'],[437,'1397.00'],[541,'1396.50'],[645,'1396.00'],[747,'1395.50'],[852,'1395.00'],[1047,'2000'],[1146,'1500'],[1248,'1000'],[1347,'500'],[1448,'0']],
    xTicks: [[139,'06:30'],[351,'06:40'],[564,'06:50'],[777,'07:00'],[990,'07:10'],[1202,'07:20']],
    tag: [[487,'1396.75','#fff','#000'],[1436,'56','#f00','#fff']],
    lines: [['#ddd',1,'29,965 1550,965'],['#ddd',1,'32,1448 1388,1448']],
    notes: [[38,1461,'© 2012 NinjaTrader, LLC','#ddd']],
    // colour, body low, body high, wick low, wick high, in ticks above 1395; n is a bar with no body, x an empty minute
    candles: 'g0,1,-1,1 g1,3,1,3 g3,4,3,4 g3,4,2,4 g3,4,3,5 g4,6,4,6 g5,6,5,7 n,,6,7 n,,5,6 n,,4,6 g6,8,6,8 n,,7,9 r7,8,7,8 g7,8,7,8 x g8,9,8,9 r8,9,7,9 r7,8,6,8 g7,8,7,8 n,,7,8 g8,9,7,9 g8,9,8,10 r7,8,7,9 g7,8,6,8 g7,8,7,8 n,,8,9 r7,8,7,8 n,,7,8 g7,8,7,8 g7,8,7,9 r8,9,8,10 n,,7,9 g8,9,8,10 x n,,9,10 g9,11,8,11 n,,9,10 g10,11,10,11 n,,10,11 n,,11,12 g11,12,11,14 r12,13,11,13 n,,12,14 n,,13,14 r12,13,11,13 n,,11,12 r10,11,9,12 r8,9,8,10 r7,8,7,8 g6,7,5,7 g7,8,7,9 n,,8,9 n,,8,9 n,,8,9 n,,7,8 g7,8,6,8 n,,8,9 r6,8,6,9 g6,7,6,8 n,,7,8 r7,8,7,8 r7,8,7,8 r7,8,7,8',
    volume: '1381 1282 1397 1312 1351 1373 1367 1386 1342 1384 1235 1243 1384r 1221 1370 1364 1384r 1351r 1433 1425 1353 1318 1370r 1337 1362 1428 1364r 1403 1430 1364 1320r 1340 1411 1419 1408 1326 1224 1359 1320 1400 1004 1307r 1425 1309 1342r 1433 1265r 1246r 1268r 1202 1263 1395 1364 1433 1373 1356 1441 1389r 1406 1444 1395r 1430r 1437r'
  },
  min120: {
    w: 555, h: 540, origin: [38, 69], step: [2.722, 2.751], bg: '#0000c8', ink: '#8484c4', axisX: 1384, axisY: 1481,
    yTicks: [[85,'1425.00'],[156,'1420.00'],[228,'1415.00'],[299,'1410.00'],[371,'1405.00'],[442,'1400.00'],[514,'1395.00'],[585,'1390.00'],[657,'1385.00'],[728,'1380.00'],[800,'1375.00'],[871,'1370.00'],[943,'1365.00'],[1014,'1360.00'],[1086,'1355.00'],[1157,'1350.00'],[1231,'1345.00'],[1303,'1340.00'],[1374,'1335.00'],[1446,'1330.00']],
    xTicks: [[80,'3/4'],[121,''],[153,''],[186,''],[243,'3/11'],[284,''],[317,''],[350,''],[406,'3/18'],[448,''],[480,''],[513,''],[569,'3/25'],[610,''],[645,''],[677,''],[731,'4/1'],[773,''],[806,''],[838,''],[887,'4/8'],[930,''],[963,''],[995,''],[1051,'4/15'],[1092,''],[1125,''],[1158,''],[1214,'4/22'],[1255,''],[1288,''],[1321,''],[1355,'']],
    tag: [[487,'1396.75','#ff0','#000']],
    prices: [['#87ceeb', 5, '65,915 68,905 75,1000 82,960 92,1030 98,1075 103,1000 104,1110 112,1030 120,1065 127,1130 133,1210 136,1330 142,1395 146,1330 151,1285 156,1320 163,1260 168,1310 174,1190 181,1220 188,1170 192,1160 196,1025 202,1100 205,1040 210,1000 216,1035 222,1000 228,1040 235,905 238,895 245,940 250,985 254,1000 260,925 266,985 272,930 279,900 283,810 290,850 298,800 303,780 306,550 312,620 320,570 325,600 331,540 338,650 346,610 352,570 359,600 366,500 373,490 380,515 388,500 395,450 402,470 412,420 420,530 427,450 433,340 437,400 445,380 452,400 461,545 468,440 476,420 484,370 490,400 498,450 505,430 513,460 520,590 527,600 530,670 536,600 545,580 552,560 560,700 565,560 572,490 583,530 590,430 597,300 603,210 612,225 618,170 624,240 632,280 637,350 645,320 650,280 657,300 662,540 668,430 676,430 682,400 688,500 694,630 698,480 707,400 715,380 719,420 726,470 732,310 740,320 747,360 753,440 758,205 764,270 772,250 780,270 786,310 790,250 795,420 798,330 806,380 815,440 822,530 826,590 834,540 840,540 844,480 850,660 856,510 862,580 868,560 875,530 885,530 888,830 896,800 903,780 911,790 916,730 923,800 930,760 938,740 943,790 948,1030 951,1110 956,1010 966,990 972,880 980,900 990,950 996,920 1003,850 1008,940 1016,660 1024,620 1030,700 1038,670 1043,820 1052,960 1058,1000 1064,920 1071,860 1077,870 1084,940 1092,960 1098,1010 1102,870 1108,680 1113,630 1120,670 1128,650 1136,690 1142,740 1148,690 1155,750 1162,700 1166,600 1172,740 1180,860 1187,810 1194,820 1200,760 1207,700 1214,790 1222,830 1230,950 1238,1080 1244,980 1252,950 1258,920 1268,900 1272,960 1280,810 1288,800 1296,730 1306,660 1316,620 1324,600 1328,580 1335,690 1341,540 1345,480 1352,570 1358,600 1362,520 1368,490', 1]],
    over: [['#b8b8dc',1,'572,154 1260,1116','3 1'],['#b8b8dc',1,'1165,585 1290,1100','4 2'],['#b8b8dc',1,'1240,712 1310,480','4 2'],['#f0d070',1,'572,361 1384,361'],['#f0d070',1,'572,524 1384,524'],['#9ccaf0',1,'1162,268 1384,268'],['#9ccaf0',1,'1162,447 1384,447'],['#e8e8f8',1,'1240,357 1384,357'],['#e8e8f8',1,'1240,496 1384,496'],['#9090d0',1,'1162,1102 1384,1102']],
    notes: [[1169,248,'162.00% (1412.03)','#9ccaf0'],[1141,342,'78.60% (1405.49)','#f0cc80'],[1246,338,'162.00% (1405.9)','#f0c8c0'],[1169,427,'127.00% (1399.52)','#9ccaf0'],[1246,476,'100.00% (1396.2)','#f0f0ff'],[1141,503,'61.80% (1394.17)','#f0cc80'],[1168,1082,'0.00% (1353.95)','#9090d0'],[48,1463,'© 2012 NinjaTrader, LLC','#8484c4']]
  },
  gas: {
    w: 549, h: 449, origin: [36, 111], step: [2.751, 3], bg: '#008b8b', ink: '#c4ecec', axisX: 1418, axisY: 1378,
    yTicks: [[212,'2.300'],[350,'2.250'],[488,'2.200'],[626,'2.150'],[764,'2.100'],[900,'2.050'],[1038,'2.000'],[1175,'1.950'],[1313,'1.900']],
    xTicks: [[103,''],[169,''],[221,''],[236,''],[301,'4/3'],[367,''],[485,'4/8'],[565,''],[631,''],[697,'4/12'],[763,''],[815,''],[829,''],[895,'4/17'],[961,''],[1027,''],[1093,'4/20'],[1159,''],[1225,''],[1291,'4/25'],[1357,'']],
    tag: [[861,'2.065','#d8d8d8','#000'],[1020,'2.006','#ff0','#000']], cursor: '10:00',
    over: [['#d8f0f0',1,'40,859 1418,859'],['#d8f0f0',1,'65,126 65,1378'],['#0050c0',2,'140,125 1300,1375'],['#14c890',2,'535,125 1415,818']],
    prices: [['#f0ffff', 4, '62,285 65,310 70,260 76,290 80,270 86,305 100,300 110,295 125,310 131,370 134,560 140,610 145,640 153,570 160,600 170,625 178,700 184,710 190,610 198,590 208,610 212,700 222,700 232,745 240,690 248,700 256,690 260,780 268,760 274,610 280,610 288,650 300,625 312,665 322,690 327,560 331,490 336,560 345,560 355,575 364,530 380,535 390,540 396,520 404,540 408,640 414,660 424,660 432,680 445,660 452,640 458,620 463,700 470,780 480,780 490,800 503,800 513,830 520,830 527,790 535,780 541,720 555,730 563,705 572,735 585,745 590,780 597,870 606,950 616,970 626,950 640,930 652,915 660,930 667,1000 675,1090 685,1090 700,1080 715,1085 728,1030 738,1080 752,1095 770,1085 785,1095 795,1090 803,1070 820,1065 840,1070 852,1100 860,1070 868,1000 876,1010 890,1000 905,1000 916,1010 922,1090 928,1160 940,1180 955,1165 968,1165 973,1200 984,1180 993,1090 1000,1110 1004,1180 1018,1200 1030,1175 1044,1165 1054,1190 1060,1260 1070,1300 1082,1290 1092,1280 1102,1280 1108,1300 1118,1260 1128,1250 1140,1245 1148,1180 1160,1190 1172,1190 1182,1250 1188,1170 1194,1080 1203,1000 1218,975 1230,1010 1244,1020 1252,1030 1258,1060 1266,1100 1275,1090 1283,1070 1293,1090 1303,1110 1312,1060 1320,1020 1327,1030 1333,830 1338,820 1345,780 1352,810 1360,820 1370,845 1380,900 1384,670 1388,680 1392,800 1397,770 1399,1010', 1]],
    spikes: [[76,192,280],[260,640,850],[727,848,1120],[793,1040,1150],[797,1070,1150],[870,955,1040],[857,963,1100],[1057,1117,1250],[1387,523,800],[331,475,560],[519,790,868],[1250,960,1070],[210,600,760],[1399,760,1040]],
    notes: [[44,1360,'© 2012 NinjaTrader, LLC','#c4ecec']]
  },
  gold: {
    w: 548, h: 445, origin: [28, 117], step: [2.751, 3], bg: '#404040', ink: '#888', axisX: 1388, axisY: 1372,
    yTicks: [[207,'1685.0'],[282,'1680.0'],[359,'1675.0'],[435,'1670.0'],[511,'1665.0'],[587,'1660.0'],[662,'1655.0'],[738,'1650.0'],[815,'1645.0'],[890,'1640.0'],[967,'1635.0'],[1043,'1630.0'],[1118,'1625.0'],[1195,'1620.0'],[1271,'1615.0'],[1350,'1610.0']],
    xTicks: [[92,'3/30'],[158,''],[225,''],[290,'4/4'],[356,''],[408,''],[422,''],[488,'4/10'],[554,''],[620,''],[686,'4/13'],[752,''],[818,''],[884,'4/18'],[950,''],[1068,'4/22'],[1148,''],[1214,''],[1280,'4/26'],[1346,'']],
    tag: [[651,'1655.7','#ff0','#000']],
    lines: [['#6fa898',1,'28,1250 1388,1250','4 1'],['#6fa898',1,'28,1301 1388,1301','4 1']],
    prices: [['#daa520', 7, '52,580 54,500 60,760 65,640 73,530 82,550 90,530 97,550 104,500 110,520 116,450 123,550 130,420 136,430 146,380 155,410 165,410 173,490 183,480 188,280 192,230 200,280 208,310 216,280 225,270 235,280 245,310 250,310 252,260 258,370 263,350 266,860 270,780 282,765 288,830 298,810 306,960 314,1080 320,1200 326,1260 330,1180 336,1200 346,1140 356,1120 366,1110 374,1150 380,1120 386,1020 394,1070 402,1020 408,1010', 1], ['#daa520', 7, '408,800 418,900 426,850 434,820 442,870 450,790 458,830 463,800 472,870 480,800 487,690 495,690 503,770 510,800 516,830 520,960 524,760 528,560 536,590 546,620 556,640 565,580 572,630 580,580 590,600 602,590 612,590 622,600 630,590 636,620 644,690 649,400 655,340 660,300 668,340 680,330 690,350 698,340 704,380 712,370 716,430 722,500 727,660 735,600 742,670 752,710 762,820 770,760 776,730 782,720 790,710 800,690 810,690 820,740 828,760 838,650 845,680 852,700 862,710 872,720 882,700 890,680 898,710 905,790 912,860 920,890 930,870 940,850 952,870 960,860 966,810 974,960 980,720 987,880 998,850 1010,850 1020,810 1028,810 1040,820 1050,840 1062,840 1075,840 1090,850 1094,960 1100,990 1107,1060 1115,990 1122,960 1128,900 1140,920 1150,940 1157,960 1165,920 1172,830 1180,830 1190,850 1205,855 1220,850 1235,850 1240,840 1248,900 1252,960 1258,830 1268,820 1278,800 1290,760 1300,760 1308,710 1314,600 1322,600 1332,620 1345,620 1354,670 1362,640 1370,650', 1]],
    spikes: [[849,608,965],[975,850,1025],[1251,880,1120],[1094,840,1070],[780,590,820],[322,1060,1290],[328,1140,1300],[520,900,1005],[980,662,800],[1178,735,860],[1108,1000,1140],[192,198,280],[658,262,330],[266,400,885],[60,650,780],[252,237,330],[457,770,930],[1313,556,650],[726,480,742],[762,760,860]],
    notes: [[34,1353,'© 2012 NinjaTrader, LLC','#888']]
  },
  euro: {
    w: 553, h: 452, origin: [28, 96], step: [2.751, 3], bg: '#004000', ink: '#6f9a6f', axisX: 1402, axisY: 1372,
    yTicks: [[143,'1.3400'],[288,'1.3350'],[431,'1.3300'],[575,'1.3250'],[722,'1.3200'],[866,'1.3150'],[1010,'1.3100'],[1157,'1.3050'],[1301,'1.3000']],
    xTicks: [[108,'3/30'],[172,''],[235,''],[298,'4/4'],[361,''],[460,'4/8'],[537,''],[600,''],[664,'4/12'],[727,''],[777,''],[790,''],[853,'4/17'],[917,''],[980,''],[1043,'4/20'],[1107,''],[1170,''],[1233,'4/25'],[1297,''],[1360,'']],
    tag: [[624,'1.3233','#ff0','#000']],
    prices: [['#9acd32', 7, '47,340 53,370 58,300 62,460 70,500 78,520 84,480 92,410 98,380 102,250 112,260 118,240 125,290 133,260 140,330 150,290 158,230 166,300 178,290 186,250 193,310 200,420 206,320 215,340 224,330 232,280 242,310 250,280 256,310 262,380 268,310 276,320 277,640 284,600 290,640 296,730 304,700 310,720 316,800 322,860 327,940 333,900 345,880 358,850 368,840 375,870 379,1080 388,1120 400,1110 415,1100 430,1085 445,1090 452,1020 462,1050 470,1140 478,1100 488,1060 500,1080 508,1030 513,910 520,950 530,960 536,890 544,930 550,1050 558,1070 564,960 572,1070 582,1040 592,1070 602,1010 612,980 618,890 628,860 636,960 644,990 654,960 664,900 674,900 680,960 688,850 694,780 704,720 712,740 720,730 728,790 738,800 746,840 752,860 757,1020 765,1060 776,1070 784,1220 792,1220 800,1250 806,1240 812,1200 818,1150 826,1040 832,880 842,900 850,940 862,970 870,850 878,900 884,910 892,880 900,910 908,900 916,950 926,940 934,1030 943,1070 948,930 960,940 975,930 988,950 996,880 1005,1050 1010,890 1020,920 1032,900 1040,880 1050,870 1058,830 1064,720 1074,680 1084,670 1092,680 1098,730 1108,740 1114,760 1120,860 1130,890 1140,920 1150,850 1160,850 1172,850 1180,810 1190,810 1197,830 1200,700 1212,720 1220,740 1230,720 1240,730 1250,670 1258,660 1266,710 1276,660 1290,645 1304,640 1310,580 1320,690 1328,620 1340,600 1345,640 1347,750 1356,700 1364,740 1371,800 1377,640 1385,610', 1]],
    spikes: [[186,178,260],[117,188,250],[159,195,250],[251,216,300],[800,1180,1300],[703,667,760],[870,783,850],[1308,528,620],[1328,553,640],[1137,900,993],[943,1040,1123],[468,1080,1193],[449,955,1170],[389,1090,1185],[327,900,975],[200,350,480],[1371,740,835],[1275,650,795],[994,808,900],[1004,950,1090],[571,1000,1130],[563,880,960],[72,480,555],[140,300,388]],
    notes: [[30,1353,'© 2012 NinjaTrader, LLC','#6f9a6f']]
  }
};

function noise(seed) {
  let s = seed;
  return () => { s = (s * 16807) % 2147483647; return s / 2147483647; };
}

function draw(c) {
  const X = v => (v - c.origin[0]) / c.step[0];
  const Y = v => (v - c.origin[1]) / c.step[1];
  const crisp = v => Math.round(v) + 0.5;
  const rnd = noise(c.w * 31 + c.h);
  const out = [`<rect width="${c.w}" height="${c.h}" fill="${c.bg}"/>`];
  const text = (x, y, s, fill, extra = '') => out.push(`<text x="${Math.round(x)}" y="${Math.round(y)}" fill="${fill}" ${extra}>${s}</text>`);
  const poly = list => (list || []).forEach(([color, width, pts, dash]) => {
    const p = pts.split(' ').map(q => { const [a, b] = q.split(',').map(Number); return crisp(X(a)) + ',' + crisp(Y(b)); }).join(' ');
    out.push(`<polyline points="${p}" fill="none" stroke="${color}" stroke-width="${width}"${dash ? ` stroke-dasharray="${dash}"` : ''}/>`);
  });

  poly(c.lines);

  if (c.candles) {
    const level = n => Math.round(Y(852 - 51.85 * n));
    c.candles.split(' ').forEach((s, i) => {
      if (s === 'x') return;
      const x = Math.round(X(54 + 21.27 * i));
      const [lo, hi, wickLow, wickHigh] = s.slice(1).split(',').map(Number);
      out.push(`<path d="M${x + 0.5} ${level(wickLow)}V${level(wickHigh)}" stroke="#aaa"/>`);
      if (s[0] !== 'n') out.push(`<rect x="${x - 1}" y="${level(hi) + 1}" width="3" height="${level(lo) - level(hi) - 1}" fill="${s[0] === 'g' ? '#90ee90' : '#f00'}"/>`);
    });
    c.volume.split(' ').forEach((s, i) => {
      const x = Math.round(X(53 + 21.27 * i));
      const top = Y(parseInt(s, 10));
      out.push(`<rect x="${x}" y="${top}" width="2" height="${Y(1447) - top}" fill="${s.endsWith('r') ? '#b22222' : '#32cd32'}"/>`);
    });
  }

  (c.prices || []).forEach(([color, amp, pts, gap]) => {
    const p = pts.split(' ').map(q => { const [a, b] = q.split(',').map(Number); return [X(a), Y(b)]; });
    const cols = new Map();
    const put = (x, y) => {
      const k = Math.round(x / gap) * gap;
      const r = cols.get(k) || [y, y];
      cols.set(k, [Math.min(r[0], y), Math.max(r[1], y)]);
    };
    for (let i = 0; i + 1 < p.length; i++) {
      for (let t = 0; t <= 1; t += 0.1) put(p[i][0] + (p[i + 1][0] - p[i][0]) * t, p[i][1] + (p[i + 1][1] - p[i][1]) * t);
    }
    let d = '';
    cols.forEach((r, k) => {
      const hi = r[0] - 1 - rnd() * rnd() * amp * 1.5;
      const lo = r[1] + 1 + rnd() * rnd() * amp * 1.5;
      d += `M${gap > 1 ? k + 0.5 : k} ${hi.toFixed(1)}V${lo.toFixed(1)}`;
      if (gap > 1) d += `M${k - 1} ${Math.round((hi + r[0]) / 2) + 0.5}h4M${k - 1} ${Math.round((lo + r[1]) / 2) + 0.5}h3`;
    });
    out.push(`<path d="${d}" stroke="${color}" stroke-width="${gap > 1 ? 1 : 2}" fill="none"/>`);
  });
  (c.spikes || []).forEach(([x, a, b]) => out.push(`<path d="M${crisp(X(x))} ${Y(a)}V${Y(b)}" stroke="${c.prices[0][0]}"/>`));
  poly(c.over);

  const ax = crisp(X(c.axisX));
  const ay = crisp(Y(c.axisY));
  (c.notes || []).forEach(([x, y, s, fill, cls]) => text(X(x), Y(y) + 4, s, fill, cls ? `class="${cls}"` : ''));
  out.push(`<rect x="${ax}" y="0" width="${c.w - ax}" height="${c.h}" fill="${c.bg}"/>`);
  poly((c.lines || []).filter(l => l[2].includes('1550')));
  out.push(`<path d="M${ax} 5V${ay}H1" fill="none" stroke="${c.ink}"/>`);
  c.yTicks.forEach(([y, s]) => {
    out.push(`<path d="M${ax} ${crisp(Y(y))}h6" stroke="${c.ink}"/>`);
    text(ax + 8, Y(y) + 4, s, c.ink);
  });
  c.xTicks.forEach(([x, s]) => {
    out.push(`<path d="M${crisp(X(x))} ${ay}v6" stroke="${c.ink}"/>`);
    if (s) text(X(x), ay + 17, s, c.ink, 'text-anchor="middle"');
  });
  c.tag.forEach(([y, s, fill, ink]) => {
    const cy = Math.round(Y(y));
    const w = 6 + s.length * 6;
    out.push(`<path d="M${ax + 1} ${cy}l6 -6h${w - 2}v13h${-w + 2}z" fill="${fill}" stroke="${fill}"/>`);
    text(ax + 8, cy + 4, s, ink);
  });
  if (c.cursor) {
    out.push(`<rect x="0" y="${ay + 5}" width="31" height="14" fill="#d8d8d8"/>`);
    text(1, ay + 17, c.cursor, '#000');
  }
  return `<svg class="plot" viewBox="0 0 ${c.w} ${c.h}">${out.join('')}</svg>`;
}

document.querySelectorAll('.win').forEach(win => {
  win.innerHTML = `<header class="bar"><svg class="ico"><use href="#i-chart"/></svg><h2>${win.dataset.title}</h2>
<button class="lbtn">L</button><span class="ctl"><button aria-label="Minimize"><svg><use href="#i-min"/></svg></button><button aria-label="Maximize"><svg><use href="#i-max"/></svg></button><button aria-label="Close"><svg><use href="#i-close"/></svg></button></span></header>
<div class="frame">${draw(charts[win.dataset.chart])}<button class="drop" aria-label="Chart menu"></button></div>`;
});
```
